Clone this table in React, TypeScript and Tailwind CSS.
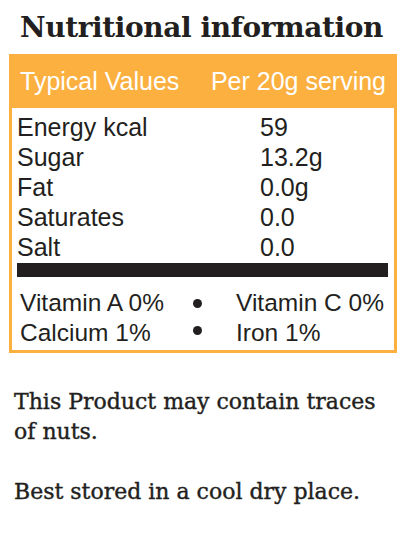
const rows = [
  ["Energy kcal", "59"],
  ["Sugar", "13.2g"],
  ["Fat", "0.0g"],
  ["Saturates", "0.0"],
  ["Salt", "0.0"],
];

export default function App() {
  return (
    <div className="w-[412px] h-[540px] bg-white text-[#231f20]">
      <h1 className="pl-[20px] pt-[9px] h-[54px] font-['DejaVu_Serif',serif] font-bold text-[28px] leading-[38px] tracking-[-0.4px]">
        Nutritional information
      </h1>

      <div className="ml-[9px] w-[388px] border-[3px] border-[#fbb040] font-['Liberation_Sans',Arial,sans-serif]">
        <div className="bg-[#fbb040] h-[51px] flex items-center justify-between pl-[8px] pr-[8px] pb-[1px] text-white text-[25px]">
          <span>Typical Values</span>
          <span>Per 20g serving</span>
        </div>
        <div className="px-[5px] pt-[4px]">
          {rows.map(([label, value]) => (
            <div key={label} className="flex h-[30px] items-center text-[25px] leading-[30px]">
              <span className="w-[243px]">{label}</span>
              <span>{value}</span>
            </div>
          ))}
          <div className="h-[14px] bg-[#231f20] mt-[1px] mr-[1px]" />
          <div className="grid grid-cols-[173px_43px_1fr] pl-[3px] pt-[11px] pb-[2px] text-[24.5px] leading-[30px]">
            <span>Vitamin A 0%</span>
            <span className="flex items-center">
              <span className="w-[9px] h-[9px] rounded-full bg-[#231f20]" />
            </span>
            <span>Vitamin C 0%</span>
            <span>Calcium 1%</span>
            <span className="flex items-center">
              <span className="w-[9px] h-[9px] rounded-full bg-[#231f20] -mt-[5px]" />
            </span>
            <span>Iron 1%</span>
          </div>
        </div>
      </div>

      <div className="ml-[14px] w-[372px] pt-[34px] font-['DejaVu_Serif',serif] text-[22px] leading-[30px] [-webkit-text-stroke:0.4px_#231f20]">
        <p>This Product may contain traces of nuts.</p>
        <p className="mt-[30px]">Best stored in a cool dry place.</p>
      </div>
    </div>
  );
}
